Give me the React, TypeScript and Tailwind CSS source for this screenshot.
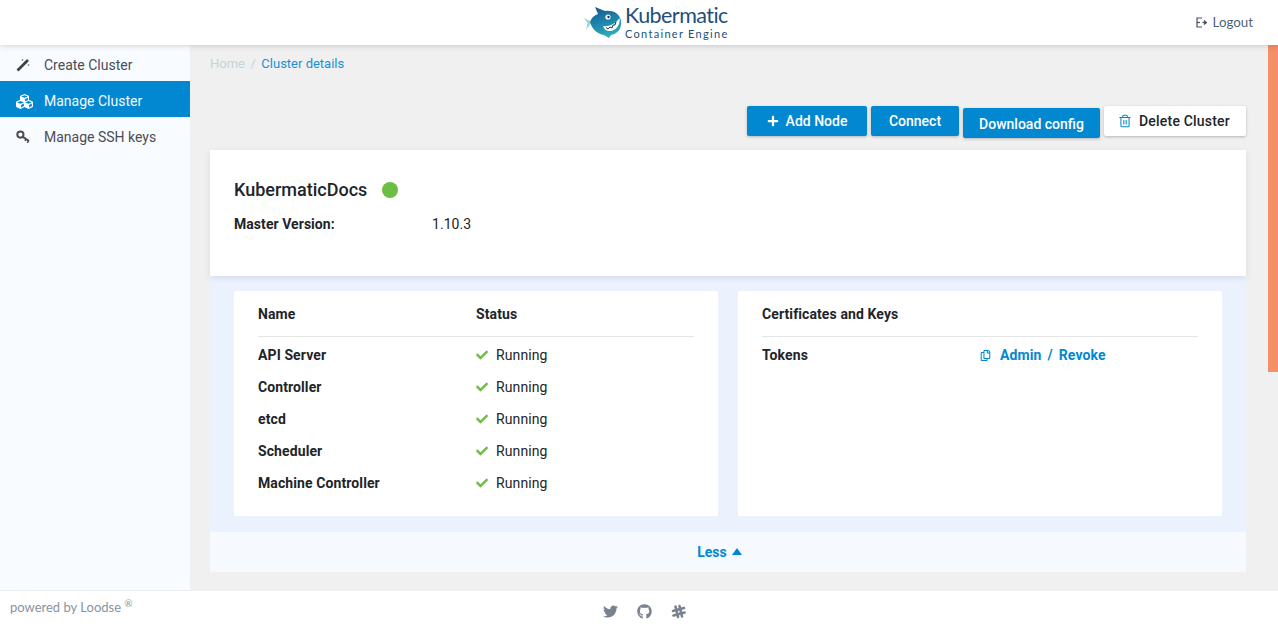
import { FaCheck, FaCubes, FaGithub, FaPlus, FaRegCopy, FaTwitter } from "react-icons/fa";
import { Trash2 } from "lucide-react";

const components = ["API Server", "Controller", "etcd", "Scheduler", "Machine Controller"];

const FishLogo = () => (
    <svg width="38" height="32" viewBox="0 0 38 32" className="shrink-0">
        <defs>
            <linearGradient id="fish" x1="0.3" y1="0" x2="0.6" y2="1">
                <stop offset="0" stopColor="#1a5a92" />
                <stop offset="0.5" stopColor="#1e86ad" />
                <stop offset="1" stopColor="#2fb3b8" />
            </linearGradient>
        </defs>
        <path d="M0 12 L8 16 L2 24 L3.5 17 Z" fill="#9ad6d0" />
        <path d="M6 16 C8 11 11 9 14 8 L11 1 L21 5 C28 4 36 7 37 15 C38 23 33 28 27 29 L25 32 L20 29 C13 28 8 23 6 16 Z" fill="url(#fish)" />
        <circle cx="24" cy="11" r="2.6" fill="#fff" />
        <circle cx="24.5" cy="11" r="1.2" fill="#12395c" />
        <path d="M19 20 C24 21 32 18 35.5 12 C37 18 32 25 26 25 C22 25 20 23 19 20 Z" fill="#fff" />
        <path d="M22 21.5 L24 23 L26 21 L28 22 L29 19 L31 19 L32 16" stroke="#12395c" strokeWidth="1" fill="none" />
    </svg>
);

const LogoutIcon = () => (
    <svg width="11" height="11" viewBox="0 0 11 11" fill="none" stroke="#4a5160" strokeWidth="1.2">
        <path d="M6 1 H1 V10 H6" />
        <path d="M1 5.5 H4" />
        <path d="M6.5 5.5 H9" />
        <path d="M8.5 4 L10.5 5.5 L8.5 7 Z" fill="#4a5160" />
    </svg>
);

const WandIcon = () => (
    <svg width="14" height="14" viewBox="0 0 14 14" className="shrink-0">
        <path d="M1.5 12.5 L9.5 4.5" stroke="#3f3f48" strokeWidth="2.6" />
        <path d="M9 5 L12 2" stroke="#3f3f48" strokeWidth="2.6" />
        <path d="M6.5 1 V3 M5.5 2 H7.5 M12.5 6 V8 M11.5 7 H13.5" stroke="#8a8a92" strokeWidth="0.8" />
    </svg>
);

const KeyIcon = () => (
    <svg width="14" height="14" viewBox="0 0 14 14" fill="none" stroke="#4d4a50" className="shrink-0">
        <circle cx="4.4" cy="4.6" r="3.1" strokeWidth="2" />
        <path d="M6.8 6.8 L13 11" strokeWidth="2" />
        <path d="M10 9 L9 11 M12.5 10.8 L11.4 12.8" strokeWidth="1.5" />
    </svg>
);

const SlackHash = () => (
    <svg width="15" height="15" viewBox="0 0 15 15" fill="none" stroke="#7a8290" strokeWidth="2.6" strokeLinecap="round">
        <path d="M4.5 2.5 L7 13" />
        <path d="M8.5 2 L11 12.5" />
        <path d="M2 7 L13 4" />
        <path d="M2.5 11.5 L13.5 8.5" />
    </svg>
);

const App = () => {
    return (
        <div className="h-[631px] w-[1278px] flex flex-col overflow-hidden bg-[#f0f0f0] font-['Roboto',sans-serif] text-[#212529]">
            {/* Header */}
            <header className="relative z-10 h-[45px] shrink-0 flex items-center justify-between bg-white shadow-[0_1px_6px_rgba(0,0,0,0.16)]">
                <div className="flex items-center gap-[3px] ml-[584px] mt-[-1px]">
                    <FishLogo />
                    <div className="flex flex-col leading-none font-['Lato',sans-serif] text-[#1d4f7c]">
                        <span className="text-[21.5px] leading-[21px] tracking-[-0.55px]">Kubermatic</span>
                        <span className="mt-[2px] text-[11px] leading-[12px] tracking-[1.3px]">Container Engine</span>
                    </div>
                </div>
                <div className="flex items-center gap-[6px] pr-[25px] text-[13.3px] text-[#4f6375] font-['Lato',sans-serif]">
                    <LogoutIcon />
                    <span>Logout</span>
                </div>
            </header>

            <div className="flex-1 flex min-h-0">
                {/* Sidebar */}
                <aside className="w-[190px] shrink-0 bg-[#f8fbff] text-[14px] text-[#4d4d55]">
                    <div className="h-[36px] pt-[4px] flex items-center gap-[14px] pl-[16px]">
                        <WandIcon />
                        <span>Create Cluster</span>
                    </div>
                    <div className="h-[36px] pt-[4px] flex items-center gap-[11px] pl-[16px] bg-[#0288d1] text-[#f4fbff]">
                        <FaCubes className="size-[17px] text-white" />
                        <span>Manage Cluster</span>
                    </div>
                    <div className="h-[36px] pt-[4px] flex items-center gap-[14px] pl-[16px]">
                        <KeyIcon />
                        <span>Manage SSH keys</span>
                    </div>
                </aside>

                {/* Content */}
                <main className="w-[1078px] shrink-0 pl-[20px] pr-[22px]">
                    <div className="h-[36px] pt-[1px] flex items-center gap-[5.5px] text-[13px]">
                        <span className="text-[#c5d3da]">Home</span>
                        <span className="text-[#c5d3da]">/</span>
                        <span className="text-[#1592d8]">Cluster details</span>
                    </div>

                    <div className="mt-[25px] h-[44px] flex items-start justify-end gap-[4px] text-[14px] font-medium">
                        <button className="h-[30px] w-[120px] flex items-center justify-center gap-[7px] rounded-[2px] bg-[#0288d1] text-white shadow-[0_1px_3px_rgba(0,0,0,0.25)]">
                            <FaPlus className="size-[12px]" />
                            Add Node
                        </button>
                        <button className="h-[30px] w-[88px] rounded-[2px] bg-[#0288d1] text-white shadow-[0_1px_3px_rgba(0,0,0,0.25)]">
                            Connect
                        </button>
                        <button className="mt-[2px] h-[30px] w-[137px] pt-[2px] rounded-[2px] bg-[#0288d1] text-white shadow-[0_1px_3px_rgba(0,0,0,0.25)]">
                            Download config
                        </button>
                        <button className="h-[30px] w-[142px] pr-[2px] flex items-center justify-center gap-[7px] rounded-[2px] bg-white tracking-[0.2px] text-[#212529] shadow-[0_1px_3px_rgba(0,0,0,0.25)]">
                            <Trash2 className="size-[14px] text-[#0288d1]" strokeWidth={1.8} />
                            Delete Cluster
                        </button>
                    </div>

                    {/* Summary card */}
                    <section className="relative h-[126px] bg-white px-[24px] pt-[28px] shadow-[0_2px_6px_rgba(40,60,120,0.12)]">
                        <div className="flex items-center gap-[15px]">
                            <h1 className="text-[18px] leading-[24px] font-medium">KubermaticDocs</h1>
                            <span className="size-[16px] rounded-full bg-[#6cbf43]" />
                        </div>
                        <div className="mt-[12px] flex text-[14px] leading-[20px] tracking-[0.05px]">
                            <span className="w-[198px] font-bold">Master Version:</span>
                            <span>1.10.3</span>
                        </div>
                    </section>

                    {/* Details */}
                    <section className="h-[256px] bg-[#ebf2fd] px-[24px] pt-[15px] grid grid-cols-2 gap-[20px] text-[14px] tracking-[0.1px]">
                        <div className="h-[225px] bg-white px-[24px]">
                            <div className="h-[46px] pt-[2px] flex items-center border-b border-[#e5e5e5] font-bold">
                                <span className="w-[218px]">Name</span>
                                <span>Status</span>
                            </div>
                            <div className="pt-[2px]">
                                {components.map((name) => (
                                    <div key={name} className="h-[32px] flex items-center">
                                        <span className="w-[218px] font-bold">{name}</span>
                                        <FaCheck className="size-[12px] text-[#6cbf43]" />
                                        <span className="ml-[8px]">Running</span>
                                    </div>
                                ))}
                            </div>
                        </div>
                        <div className="h-[225px] bg-white px-[24px]">
                            <div className="h-[46px] pt-[2px] flex items-center border-b border-[#e5e5e5] font-bold">
                                Certificates and Keys
                            </div>
                            <div className="pt-[2px] h-[34px] flex items-center">
                                <span className="w-[218px] font-bold">Tokens</span>
                                <FaRegCopy className="size-[11px] text-[#0288d1]" />
                                <div className="ml-[9px] flex gap-[6px] font-bold text-[#0288d1]">
                                    <span>Admin</span>
                                    <span>/</span>
                                    <span>Revoke</span>
                                </div>
                            </div>
                        </div>
                    </section>

                    {/* Less toggle */}
                    <div className="h-[40px] pr-[17px] flex items-center justify-center gap-[5px] bg-[#f6faff] text-[14px] font-bold text-[#0288d1]">
                        Less
                        <span className="mb-[2px] w-0 h-0 border-x-[5px] border-x-transparent border-b-[7px] border-b-[#0288d1]" />
                    </div>
                </main>

                {/* Scrollbar */}
                <div className="w-[10px] shrink-0">
                    <div className="h-[327px] bg-[#f39068]" />
                </div>
            </div>

            {/* Footer */}
            <footer className="relative h-[41px] shrink-0 pl-[10px] bg-white border-t border-[#eeeeee] flex items-center justify-center gap-[19px] text-[#7a8290]">
                <div className="absolute left-[10px] top-[7px] text-[13px] text-[#8a93a0] font-['Lato',sans-serif]">
                    powered by Loodse <sup className="text-[10px]">®</sup>
                </div>
                <FaTwitter className="size-[15px]" />
                <FaGithub className="size-[15px]" />
                <SlackHash />
            </footer>
        </div>
    );
};

export default App;
